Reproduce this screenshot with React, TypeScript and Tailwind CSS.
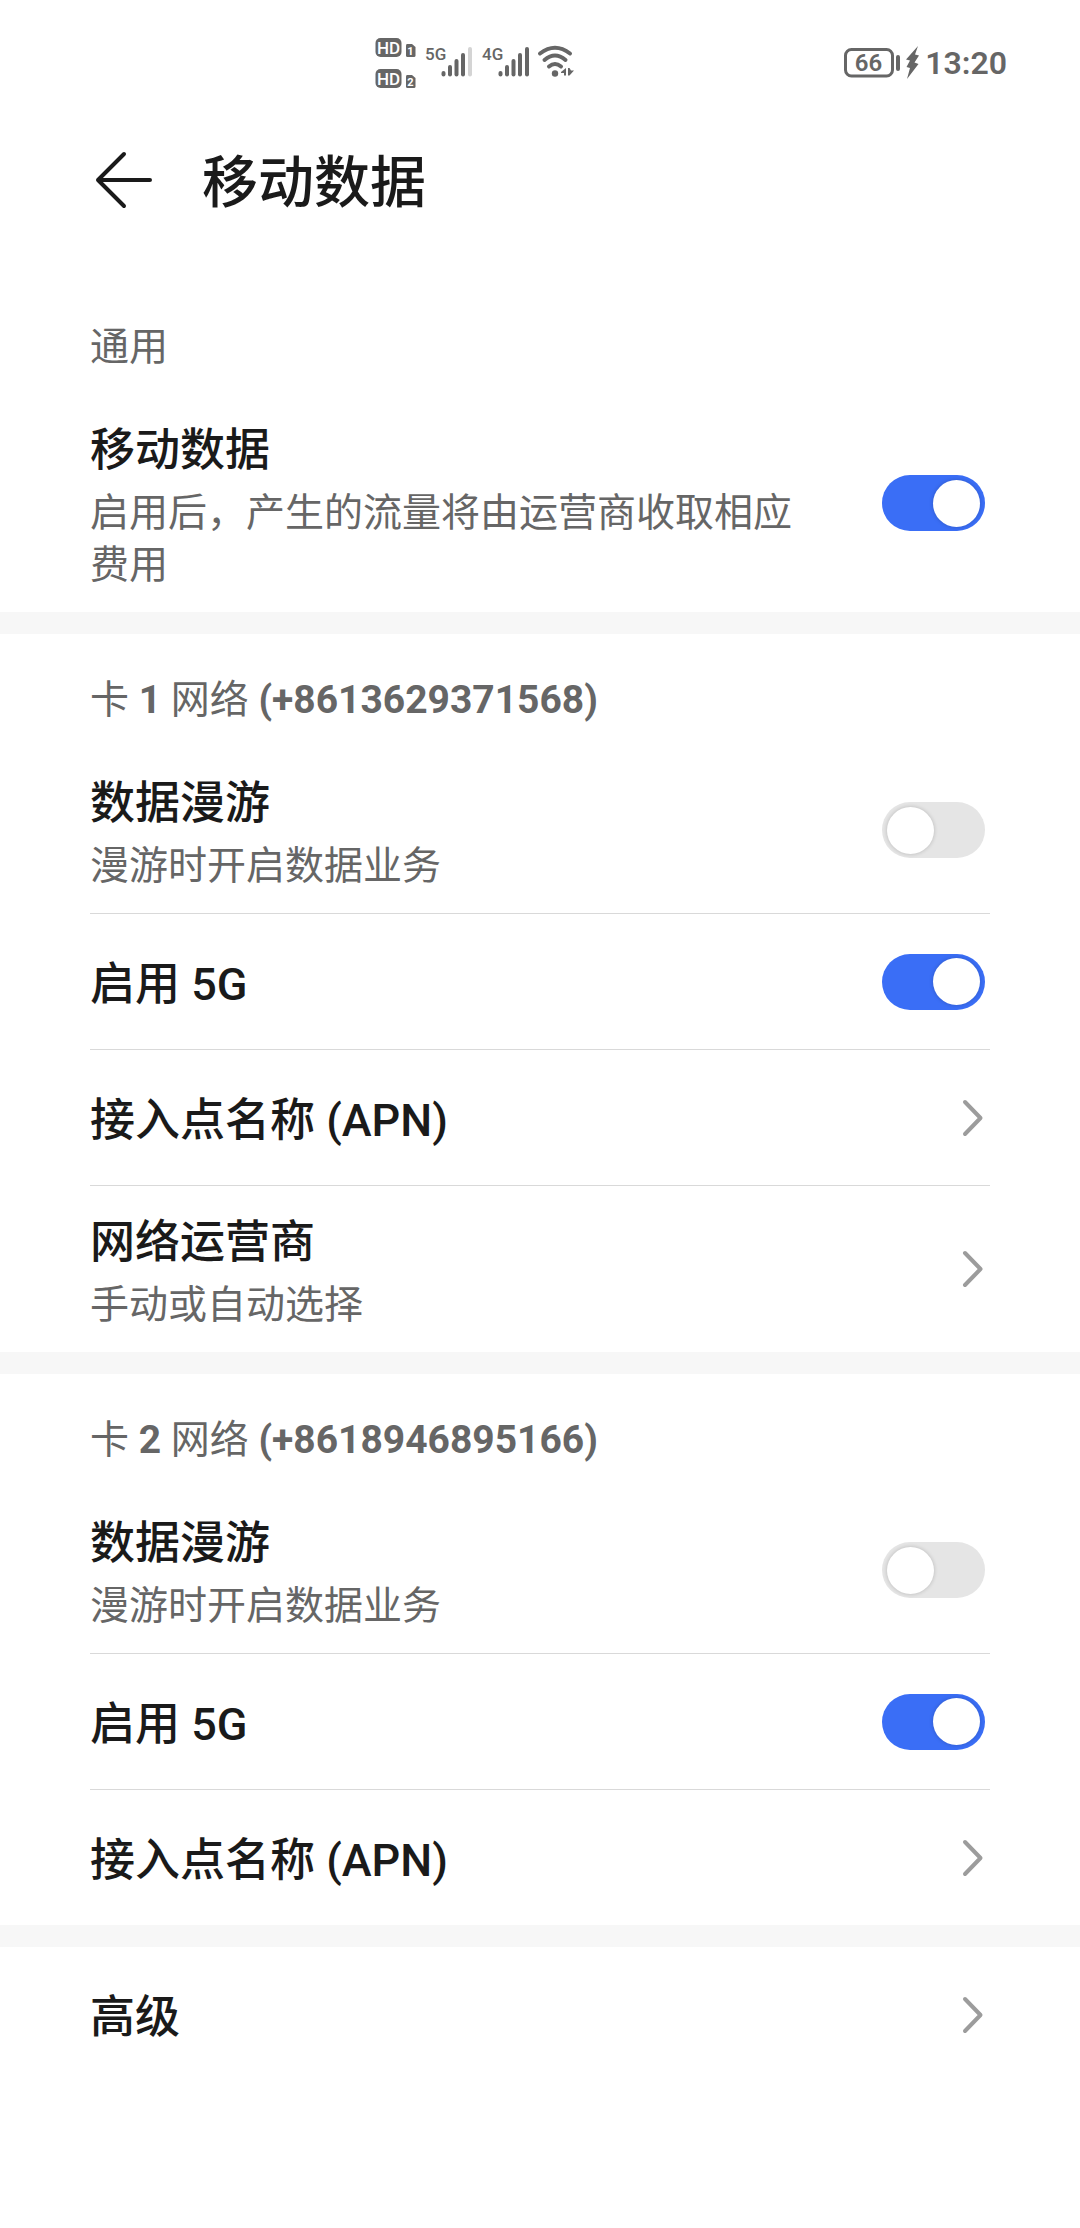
import { useState } from "react";
import type { ReactNode } from "react";

type SimCard = {
  id: string;
  slot: number;
  phone: string;
  roaming: boolean;
  fiveG: boolean;
  hasOperator: boolean;
};

const SIM_CARDS: SimCard[] = [
  { id: "sim1", slot: 1, phone: "(+8613629371568)", roaming: false, fiveG: true, hasOperator: true },
  { id: "sim2", slot: 2, phone: "(+8618946895166)", roaming: false, fiveG: true, hasOperator: false },
];

/* ── Status bar icons ── */
function HdBadges() {
  return (
    <svg width="42" height="54" viewBox="0 0 42 54" fill="none">
      {[1, 2].map((n) => (
        <g key={n} transform={n === 1 ? "translate(0 1)" : "translate(0 32)"}>
          <rect x="0.5" y="1" width="26" height="19" rx="5" fill="#666666" />
          <text x="13.5" y="16.5" textAnchor="middle" fill="#ffffff" className="text-[17px] font-medium">
            HD
          </text>
          <path d="M32 7H37L40.5 10V18.5Q40.5 20 39 20H32.5Q31 20 31 18.5V8.5Q31 7 32 7Z" fill="#666666" />
          <text x="35.5" y="17.5" textAnchor="middle" fill="#ffffff" className="text-[11px] font-bold">
            {n}
          </text>
        </g>
      ))}
    </svg>
  );
}

function SignalIcon({ label, weak }: { label: string; weak?: boolean }) {
  return (
    <svg width="48" height="54" viewBox="0 0 48 54" fill="none">
      <text x="0" y="24" fill="#666666" className="text-[17px] font-medium">
        {label}
      </text>
      <g stroke="#666666" strokeWidth="4" strokeLinecap="round">
        <path d="M18.5 37V38.5" />
        <path d="M25 31V38.5" />
        <path d="M31.5 25V38.5" />
        <path d="M38 19V38.5" />
        <path d="M45 13V38.5" stroke={weak ? "#d4d4d4" : "#666666"} />
      </g>
    </svg>
  );
}

function WifiIcon() {
  return (
    <svg width="38" height="54" viewBox="0 0 38 54" fill="none">
      <g stroke="#666666" strokeWidth="4" strokeLinecap="round">
        <path d="M3 17.5Q18 6 33 17.5" />
        <path d="M7.5 24Q18 15 28.5 24" />
        <path d="M12 30.5Q18 25.5 24 30.5" />
      </g>
      <circle cx="18" cy="37.5" r="3.2" fill="#666666" />
      <path d="M29 32V39.5H27V37H24V36Z" fill="#666666" />
      <path d="M31 32H32.5L34 34.5H37L32.5 39.5H31Z" fill="#666666" />
    </svg>
  );
}

function BatteryIcon() {
  return (
    <svg width="77" height="54" viewBox="0 0 77 54" fill="none">
      <rect x="1.5" y="13.5" width="47" height="26.5" rx="6" stroke="#666666" strokeWidth="3" />
      <text x="24.5" y="35" textAnchor="middle" fill="#666666" className="text-[24px] font-semibold">
        66
      </text>
      <rect x="52" y="19" width="4" height="16" rx="2" fill="#666666" />
      <path d="M74 10L62 23.5L66 24.5L62.5 31L66 32L63 43L74.500 28L70.5 26.5L75 19.5L71 18.500Z" fill="#666666" />
    </svg>
  );
}

function StatusBar() {
  return (
    <div className="flex h-[126px] items-center justify-between pl-[375px] pr-[73px]">
      <div className="flex items-center">
        <HdBadges />
        <div className="ml-2 flex items-center gap-[9px]">
          <SignalIcon label="5G" weak />
          <SignalIcon label="4G" />
        </div>
        <div className="ml-[7px]">
          <WifiIcon />
        </div>
      </div>
      <div className="flex items-center gap-1">
        <BatteryIcon />
        <span className="text-[32px] font-semibold leading-[40px] text-[#666666]">13:20</span>
      </div>
    </div>
  );
}

/* ── Shared pieces ── */
function BackArrow() {
  return (
    <svg width="64" height="64" viewBox="0 0 64 64" fill="none">
      <path
        d="M34 6L8 32L34 58M8 32H60"
        stroke="#1a1a1a"
        strokeWidth="4"
        strokeLinecap="round"
        strokeLinejoin="round"
      />
    </svg>
  );
}

function ChevronForward() {
  return (
    <svg className="mr-1.5 shrink-0" width="24" height="40" viewBox="0 0 24 40" fill="none">
      <path
        d="M5 4L20.5 20L5 36"
        stroke="#9c9c9c"
        strokeWidth="4"
        strokeLinecap="round"
        strokeLinejoin="round"
      />
    </svg>
  );
}

function SectionTitle({ children }: { children: ReactNode }) {
  return <h2 className="px-[90px] pb-[21px] pt-10 text-[39px] leading-[52px] text-[#666666]">{children}</h2>;
}

function Divider() {
  return <div className="mx-[90px] h-px bg-[#d9d9d9]" />;
}

function SectionGap() {
  return <div className="h-[22px] bg-[#f7f7f7]" />;
}

function RowText({ title, summary }: { title: string; summary?: string }) {
  return (
    <span className="flex min-w-0 flex-1 flex-col gap-1.5 pt-1.5">
      <span className="text-[45px] font-medium leading-[60px] text-[#1a1a1a]">{title}</span>
      {summary && <span className="text-[39px] leading-[52px] text-[#666666]">{summary}</span>}
    </span>
  );
}

function SwitchRow({
  id,
  title,
  summary,
  defaultOn,
}: {
  id: string;
  title: string;
  summary?: string;
  defaultOn: boolean;
}) {
  const [on, setOn] = useState(defaultOn);

  return (
    <label htmlFor={id} className="flex min-h-[135px] cursor-pointer items-center gap-20 px-[90px] py-[21px]">
      <RowText title={title} summary={summary} />
      <input
        id={id}
        type="checkbox"
        role="switch"
        checked={on}
        onChange={(e) => setOn(e.target.checked)}
        className="mr-[5px] flex h-14 w-[103px] shrink-0 cursor-pointer appearance-none items-center rounded-full bg-[#e5e5e5] px-[5px] before:size-[47px] before:rounded-full before:bg-white before:shadow-[0_0_4px_rgba(0,0,0,0.2)] before:content-[''] checked:justify-end checked:bg-[#3a6ef6]"
      />
    </label>
  );
}

function LinkRow({ title, summary }: { title: string; summary?: string }) {
  return (
    <a href="#" className="flex min-h-[135px] items-center gap-20 px-[90px] py-[21px]">
      <RowText title={title} summary={summary} />
      <ChevronForward />
    </a>
  );
}

/* ── Main Page ── */
export default function App() {
  return (
    <div className="min-h-screen bg-white font-['Roboto','Noto_Sans_CJK_SC',sans-serif]" lang="zh-CN">
      <StatusBar />

      <header className="mb-[47px] flex h-[108px] items-center gap-12 px-[90px]">
        <button type="button" aria-label="返回" className="cursor-pointer">
          <BackArrow />
        </button>
        <h1 className="pt-1.5 text-[56px] font-medium leading-[72px] text-[#1a1a1a]">移动数据</h1>
      </header>

      <main>
        <section>
          <SectionTitle>通用</SectionTitle>
          <SwitchRow
            id="mobile-data"
            title="移动数据"
            summary="启用后，产生的流量将由运营商收取相应费用"
            defaultOn
          />
        </section>

        {SIM_CARDS.map((sim) => (
          <section key={sim.id}>
            <SectionGap />
            <SectionTitle>
              卡 <span className="font-bold">{sim.slot}</span> 网络 <span className="font-bold">{sim.phone}</span>
            </SectionTitle>
            <SwitchRow
              id={`${sim.id}-roaming`}
              title="数据漫游"
              summary="漫游时开启数据业务"
              defaultOn={sim.roaming}
            />
            <Divider />
            <SwitchRow id={`${sim.id}-5g`} title="启用 5G" defaultOn={sim.fiveG} />
            <Divider />
            <LinkRow title="接入点名称 (APN)" />
            {sim.hasOperator && (
              <>
                <Divider />
                <LinkRow title="网络运营商" summary="手动或自动选择" />
              </>
            )}
          </section>
        ))}

        <SectionGap />
        <LinkRow title="高级" />
      </main>
    </div>
  );
}
